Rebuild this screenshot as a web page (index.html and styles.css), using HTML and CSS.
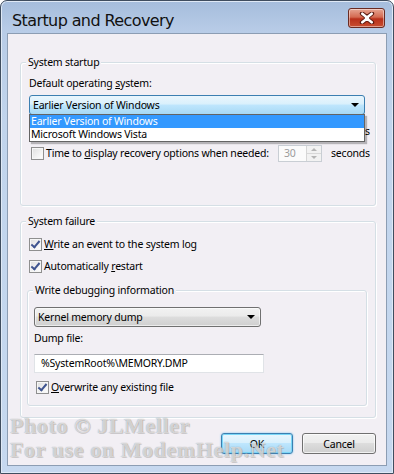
FILE: index.html
```html
<!DOCTYPE html>
<html>
<head>
<meta charset="utf-8">
<link rel="stylesheet" href="styles.css">
</head>
<body>
<div class="window">
  <div class="titlebar">
    <span class="title">Startup and Recovery</span>
    <div class="close">
      <svg width="16" height="12" viewBox="0 0 16 12"><path d="M3 1.5 L8 5.2 L13 1.5 M3 10.5 L8 6.8 L13 10.5" stroke="#5a1a10" stroke-width="4.4" fill="none" stroke-linecap="round"/><path d="M3.3 1.7 L8 5.4 L12.7 1.7 M3.3 10.3 L8 6.6 L12.7 10.3 M7 6 L9 6" stroke="#fff" stroke-width="2.6" fill="none" stroke-linecap="round"/></svg>
    </div>
  </div>
  <div class="client">
    <div class="group g-startup">
      <div class="legend">System startup</div>
      <div class="label">Default operating <u>s</u>ystem:</div>
      <div class="combo-wrap">
        <div class="combo combo-active"><span>Earlier Version of Windows</span><span class="arrow"></span></div>
        <ul class="droplist">
          <li class="sel">Earlier Version of Windows</li>
          <li>Microsoft Windows Vista</li>
        </ul>
      </div>
      <div class="row row-list">
        <span class="cb"></span>
        <span class="rowlabel">Time to display list of operating systems:</span>
        <span class="spin"><span class="spinval">30</span><span class="spinbtns"><span class="up"></span><span class="down"></span></span></span>
        <span class="secs">seconds</span>
      </div>
      <div class="row">
        <span class="cb"></span>
        <span class="rowlabel">Time to <u>d</u>isplay recovery options when needed:</span>
        <span class="spin"><span class="spinval">30</span><span class="spinbtns"><span class="up"></span><span class="down"></span></span></span>
        <span class="secs">seconds</span>
      </div>
    </div>

    <div class="group g-failure">
      <div class="legend">System failure</div>
      <div class="row chk-row first">
        <span class="cb checked"></span>
        <span><u>W</u>rite an event to the system log</span>
      </div>
      <div class="row chk-row">
        <span class="cb checked"></span>
        <span>Automatically <u>r</u>estart</span>
      </div>
      <div class="group g-debug">
        <div class="legend">Write debugging information</div>
        <div class="combo combo-kernel"><span>Kernel memory dump</span><span class="arrow"></span></div>
        <div class="label dump-label">Dump file:</div>
        <div class="textbox">%SystemRoot%\MEMORY.DMP</div>
        <div class="row chk-row overwrite">
          <span class="cb checked"></span>
          <span><u>O</u>verwrite any existing file</span>
        </div>
      </div>
    </div>

    <div class="buttons">
      <div class="btn btn-ok">OK</div>
      <div class="btn btn-cancel">Cancel</div>
    </div>

    <div class="watermark">
      <div>Photo © JLMeller</div>
      <div>For use on ModemHelp.Net</div>
    </div>
  </div>
</div>
</body>
</html>
```

FILE: styles.css
```css
* { box-sizing: border-box; }
html, body { margin: 0; padding: 0; }
body {
  width: 394px;
  height: 474px;
  background: #ffffff;
  overflow: hidden;
  font-family: "Noto Sans", "DejaVu Sans", sans-serif;
  font-size: 10.5px;
  letter-spacing: -0.2px;
  color: #000;
}
.window {
  position: relative;
  width: 394px;
  height: 474px;
  border: 1px solid #3f4d5f;
  border-radius: 7px 7px 0 0;
  background: linear-gradient(to bottom, #a5bddc 0px, #b8cce7 30px, #c1d4ec 120px, #c6d8ef 474px);
  padding: 0 6px 7px 6px;
  display: flex;
  flex-direction: column;
  box-shadow: inset 0 0 0 1px #dfe9f6;
}
.titlebar {
  height: 32px;
  flex: none;
  display: flex;
  align-items: center;
  justify-content: space-between;
  padding: 4px 2px 0 5px;
}
.title {
  font-family: "DejaVu Sans", sans-serif;
  font-size: 16px;
  color: #111;
  letter-spacing: -0.6px;
  margin-top: 3px;
}
.close {
  width: 37px;
  height: 20px;
  margin-top: -2px;
  border: 1px solid #6a2b22;
  border-radius: 3px;
  background: linear-gradient(to bottom, #e6a592 0%, #d46a51 45%, #b8301a 55%, #c84e30 100%);
  box-shadow: inset 0 0 0 1px rgba(255,255,255,0.45);
  display: flex;
  align-items: center;
  justify-content: center;
}
.client {
  position: relative;
  flex: 1;
  background: #f2eff4;
  border: 1px solid #8c9db3;
  padding: 28px 10px 0 12px;
}
.group {
  position: relative;
  border: 1px solid #d5dfe5;
  border-radius: 3px;
  box-shadow: inset 1px 1px 0 #fff, 1px 1px 0 #fff;
}
.legend {
  position: absolute;
  top: -8px;
  left: 5px;
  padding: 0 2px;
  line-height: 14px;
  background: #f2eff4;
}
.g-startup {
  height: 144px;
  padding: 13px 0 0 8px;
}
.label { line-height: 14px; height: 14px; }
.combo-wrap {
  position: relative;
  margin-top: 5px;
  width: 336px;
}
.combo {
  height: 20px;
  display: flex;
  align-items: center;
  justify-content: space-between;
  padding: 0 5px 0 3px;
  border-radius: 3px;
}
.combo-active {
  border: 1px solid #3c7fb1;
  background: linear-gradient(to bottom, #eaf6fd 0%, #d9f0fc 45%, #bee6fd 50%, #a7d9f5 100%);
}
.arrow {
  width: 0; height: 0;
  border-left: 4px solid transparent;
  border-right: 4px solid transparent;
  border-top: 4px solid #000;
}
.droplist {
  position: absolute;
  left: 0;
  top: 19px;
  width: 336px;
  margin: 0;
  padding: 0;
  list-style: none;
  background: #fff;
  border: 1px solid #646464;
  box-shadow: 2px 2px 1px rgba(0,0,0,0.25);
  z-index: 2;
}
.droplist li {
  height: 13px;
  line-height: 13px;
  padding-left: 1px;
}
.droplist li.sel { background: #3399ff; color: #fff; }
.row {
  display: flex;
  align-items: center;
  height: 22px;
}
.row-list { margin-top: 5px; }
.cb {
  flex: none;
  width: 13px;
  height: 13px;
  border: 1px solid #8f8f8f;
  background: linear-gradient(135deg, #dedede 0%, #f3f3f3 60%, #ffffff 100%);
  box-shadow: inset 0 0 0 1px #f6f6f6;
  margin: 0 2px 0 2px;
  position: relative;
}
.cb.checked::after {
  content: "";
  position: absolute;
  left: 3px;
  top: 0px;
  width: 3px;
  height: 7px;
  border-right: 2px solid #3f548f;
  border-bottom: 2px solid #3f548f;
  transform: rotate(40deg);
}
.rowlabel { width: 232px; flex: none; white-space: nowrap; }
.spin {
  flex: none;
  width: 44px;
  height: 17px;
  border: 1px solid #c9ced4;
  background: #fbfbfb;
  display: flex;
  justify-content: space-between;
  margin-right: 9px;
}
.spinval { color: #9c9c9c; padding-left: 5px; line-height: 15px; }
.spinbtns {
  width: 15px;
  border-left: 1px solid #d6d6d6;
  display: flex;
  flex-direction: column;
}
.spinbtns span {
  flex: 1;
  position: relative;
  background: #f2f2f2;
}
.spinbtns .up { border-bottom: 1px solid #d8d8d8; }
.spinbtns .up::after, .spinbtns .down::after {
  content: "";
  position: absolute;
  left: 4px;
  top: 2px;
  border-left: 3px solid transparent;
  border-right: 3px solid transparent;
}
.spinbtns .up::after { border-bottom: 3px solid #b5b5b5; }
.spinbtns .down::after { border-top: 3px solid #b5b5b5; }
.secs { white-space: nowrap; }

.g-failure {
  margin-top: 15px;
  height: 197px;
  padding: 11px 0 0 8px;
}
.chk-row .cb { margin-left: 0; }
.g-debug {
  margin: 13px 0 0 -2px;
  width: 340px;
  height: 116px;
  padding: 16px 0 0 6px;
}
.combo-kernel {
  width: 227px;
  border: 1px solid #707070;
  background: linear-gradient(to bottom, #f2f2f2 0%, #ebebeb 45%, #dddddd 50%, #cfcfcf 100%);
  box-shadow: inset 0 0 0 1px rgba(255,255,255,0.6);
}
.dump-label { margin-top: 4px; }
.textbox {
  margin-top: 9px;
  width: 230px;
  height: 19px;
  border: 1px solid #e0e3e7;
  border-top-color: #abadb3;
  background: #fff;
  padding-left: 6px;
  line-height: 17px;
}
.overwrite { margin-top: 3px; }
.overwrite .cb { margin-left: 2px; }

.buttons {
  display: flex;
  justify-content: flex-end;
  gap: 9px;
  margin-top: 15px;
}
.btn {
  width: 74px;
  height: 21px;
  border: 1px solid #707070;
  border-radius: 3px;
  background: linear-gradient(to bottom, #f2f2f2 0%, #ebebeb 45%, #dddddd 50%, #cfcfcf 100%);
  box-shadow: inset 0 0 0 1px rgba(255,255,255,0.7);
  display: flex;
  align-items: center;
  justify-content: center;
}
.btn-ok {
  width: 72px;
  border-color: #3c7fb1;
  background: linear-gradient(to bottom, #eaf6fd 0%, #d9f0fc 45%, #bee6fd 50%, #a7d9f5 100%);
  box-shadow: inset 0 0 0 1px #7bd7f7, 0 0 2px #6fc3f0;
}
.watermark {
  position: absolute;
  left: 2px;
  top: 380px;
  font-family: "Liberation Serif", serif;
  font-weight: bold;
  font-size: 22px;
  line-height: 24px;
  color: rgba(255,255,255,0.6);
  text-shadow: 0 0 1px rgba(110,110,110,0.7), 1px 1px 0 rgba(150,150,150,0.35);
  letter-spacing: 0.6px;
  pointer-events: none;
  white-space: nowrap;
}
```
